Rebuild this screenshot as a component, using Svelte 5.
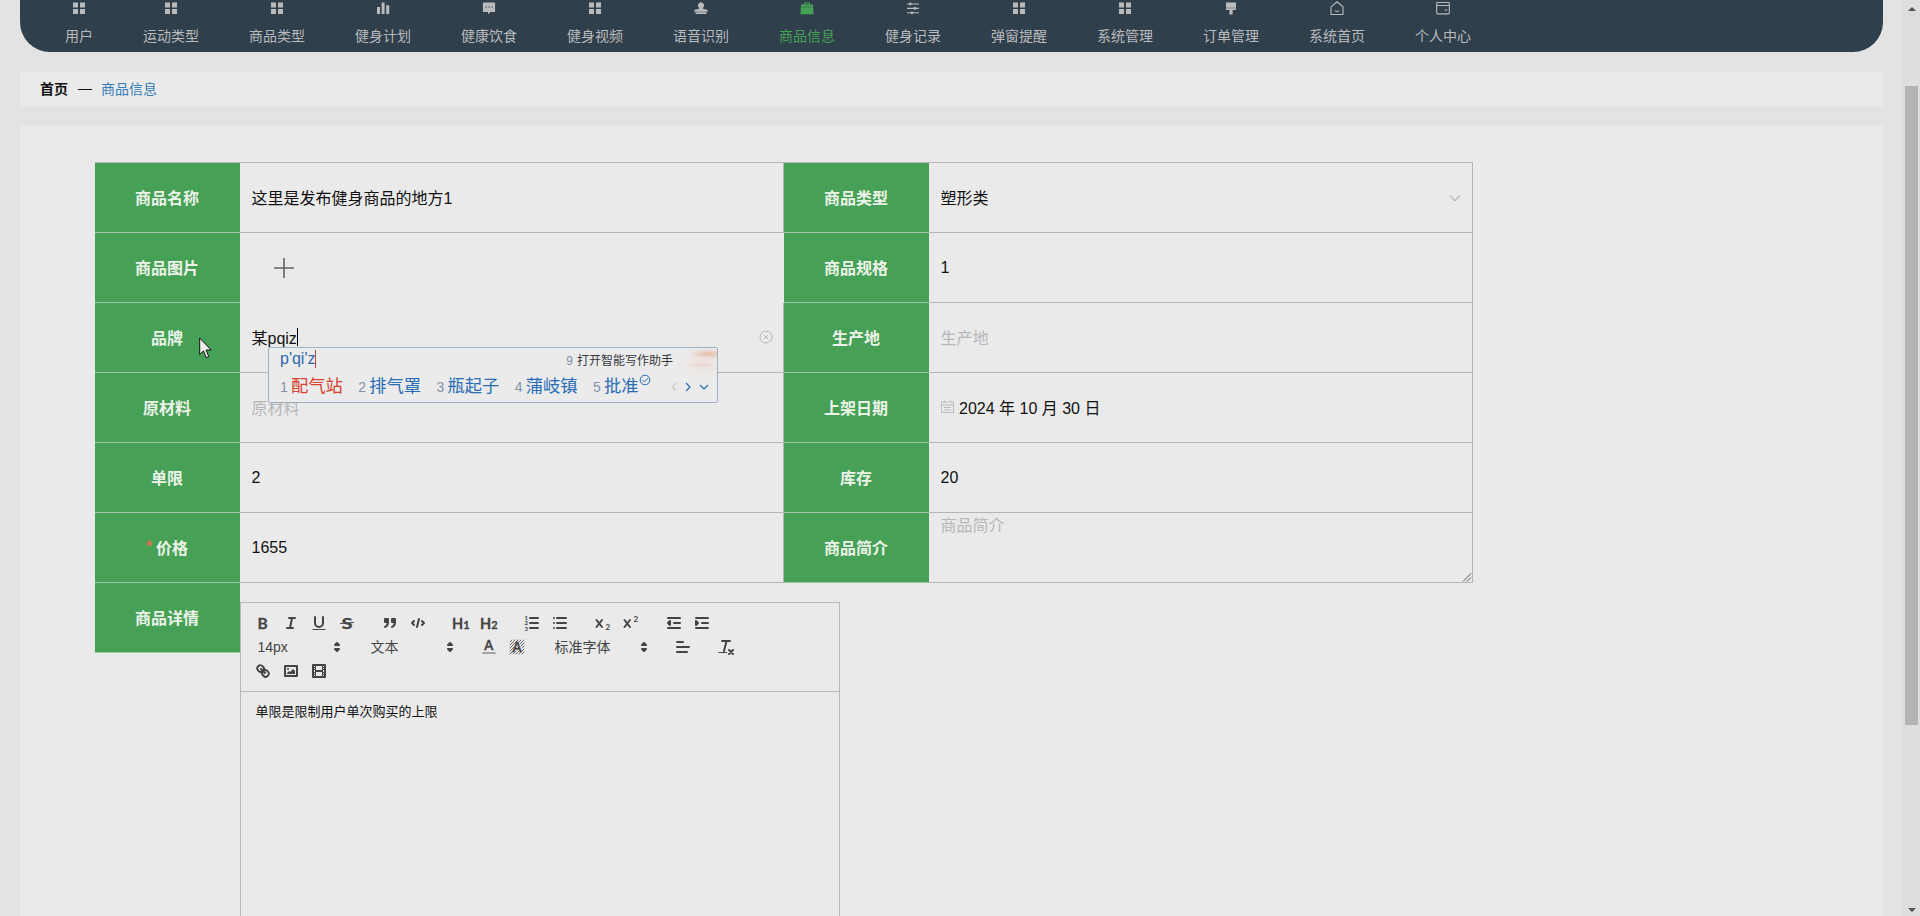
<script lang="ts">
	type NavItem = {
		label: string;
		icon: string;
	};

	const navItems: NavItem[] = [
		{ label: "用户", icon: "menu" },
		{ label: "运动类型", icon: "menu" },
		{ label: "商品类型", icon: "menu" },
		{ label: "健身计划", icon: "chart" },
		{ label: "健康饮食", icon: "comment" },
		{ label: "健身视频", icon: "menu" },
		{ label: "语音识别", icon: "stamp" },
		{ label: "商品信息", icon: "bag" },
		{ label: "健身记录", icon: "operation" },
		{ label: "弹窗提醒", icon: "menu" },
		{ label: "系统管理", icon: "menu" },
		{ label: "订单管理", icon: "brush" },
		{ label: "系统首页", icon: "house" },
		{ label: "个人中心", icon: "card" },
	];
	const active = "商品信息";

	const candidates = ["配气站", "排气罩", "瓶起子", "蒲岐镇", "批准"];
</script>

{#snippet navIcon(name: string)}
	<svg class="nav-icon" viewBox="0 0 14 14">
		{#if name === "menu"}
			<path d="M1 1.5h5v5H1zM8 1.5h5v5H8zM1 8h5v5H1zM8 8h5v5H8z" />
		{:else if name === "chart"}
			<path d="M1 6h3v7H1zM5.6 1.5h3V13h-3zM10.2 4.3h3V13h-3z" />
		{:else if name === "comment"}
			<path d="M1.5 1.5h11a.6.6 0 0 1 .6.6v8.3a.6.6 0 0 1-.6.6H8.5L6 13.2V11H1.5a.6.6 0 0 1-.6-.6V2.1a.6.6 0 0 1 .6-.6z" />
			<path class="dots" d="M3.5 6h1.3M6.4 6h1.3M9.3 6h1.3" />
		{:else if name === "stamp"}
			<path d="M7 1.2a3.2 3.2 0 0 1 2.200 5.400c-.5.600-.3 1.300.4 1.500l2.400.4a1.500 1.500 0 0 1 1.500 2.300H.5A1.500 1.500 0 0 1 2 8.500l2.400-.4c.7-.2.9-.9.4-1.500A3.200 3.200 0 0 1 7 1.200zM1.500 11.200h11V13h-11z" />
		{:else if name === "bag"}
			<path d="M4 3.5V1.4h6v2.1h3L13.5 13.2H.5L1 3.5zM5.1 3.5h3.8v-1H5.1z" fill-rule="evenodd" />
			<path class="seam" d="M1.5 6h11" />
		{:else if name === "operation"}
			<path class="line" d="M1 3h12M1 7.4h12M1 11.8h12" />
			<circle cx="4.3" cy="3" r="1.4" />
			<circle cx="9" cy="7.4" r="1.4" />
			<circle cx="6" cy="11.8" r="1.4" />
		{:else if name === "brush"}
			<path d="M2 1.5h10V9H8.6v4.5H5.4V9H2z" />
			<path class="seam" d="M2 7h10" />
		{:else if name === "house"}
			<path class="line" d="M1 5.8 7 .8l6 5V13.5H1zM5 9.5c1 1.3 3 1.3 4 0" />
		{:else}
			<path class="line" d="M1.5 1.5h11a.8.8 0 0 1 .8.8v9.8a.8.8 0 0 1-.8.8h-11a.8.8 0 0 1-.8-.8V2.3a.8.8 0 0 1 .8-.8zM.7 4.5h12.6M8.5 9h2.8" />
		{/if}
	</svg>
{/snippet}

{#snippet arrows()}
	<svg class="tool arrows" viewBox="0 0 18 18">
		<polygon class="solid" points="7 11 9 13 11 11 7 11" />
		<polygon class="solid" points="7 7 9 5 11 7 7 7" />
	</svg>
{/snippet}

<div class="page">
	<div class="content">
		<nav>
			{#each navItems as item}
				<div class="nav-item" class:active={item.label === active}>
					{@render navIcon(item.icon)}
					<span>{item.label}</span>
				</div>
			{/each}
		</nav>

		<div class="breadcrumb">
			<b>首页</b>
			<span class="dash">—</span>
			<span class="current">商品信息</span>
		</div>

		<main>
			<div class="form">
				<div class="label">商品名称</div>
				<div class="value">这里是发布健身商品的地方1</div>
				<div class="label">商品类型</div>
				<div class="value">
					塑形类
					<svg class="chevron" viewBox="0 0 12 12"><path d="M1 3.5 6 8.7l5-5.2" /></svg>
				</div>

				<div class="label">商品图片</div>
				<div class="value upload">
					<svg viewBox="0 0 20 20"><path d="M10 0v20M0 10h20" /></svg>
				</div>
				<div class="label">商品规格</div>
				<div class="value number">1</div>

				<div class="label">
					品牌
					<svg class="pointer" viewBox="0 0 13 22">
						<path d="M.7 1v16.5l3.8-3.6 2.7 6.7 2.6-1.1-2.8-6.5h5.2z" />
					</svg>
				</div>
				<div class="value">
					某pqiz<i class="caret"></i>
					<svg class="clear" viewBox="0 0 14 14">
						<circle cx="7" cy="7" r="6" />
						<path d="m4.9 4.9 4.2 4.2M9.1 4.9 4.9 9.1" />
					</svg>
					<div class="ime">
						<div class="ime-top">
							<span class="pinyin">p'qi'z</span>
							<span class="hint"><em>9</em>打开智能写作助手</span>
						</div>
						<div class="ime-list">
							{#each candidates as word, i}
								<span class="candidate" class:first={i === 0}><em>{i + 1}</em>{word}</span>
							{/each}
							<svg class="check" viewBox="0 0 12 12">
								<circle cx="6" cy="6" r="4.8" />
								<path d="m3.5 6 1.9 1.9L9.3 4" />
							</svg>
							<svg class="pager" viewBox="0 0 40 12">
								<path class="off" d="M6 2 2.5 6 6 10" />
								<path d="m16 2 4 4-4 4" />
								<path d="m30 4 4 4 4-4" />
							</svg>
						</div>
					</div>
				</div>
				<div class="label">生产地</div>
				<div class="value placeholder">生产地</div>

				<div class="label">原材料</div>
				<div class="value placeholder">原材料</div>
				<div class="label">上架日期</div>
				<div class="value date">
					<svg viewBox="0 0 14 14">
						<path d="M.5 2h12v10.500H.5zM.5 5h12M3.500.500v2M9.500.500v2M3 7.500h7M3 10h7" />
					</svg>
					2024 年 10 月 30 日
				</div>

				<div class="label">单限</div>
				<div class="value number">2</div>
				<div class="label">库存</div>
				<div class="value number">20</div>

				<div class="label"><span class="required">*</span>价格</div>
				<div class="value number">1655</div>
				<div class="label">商品简介</div>
				<div class="value placeholder textarea">
					商品简介
					<svg class="grip" viewBox="0 0 10 10"><path d="M1 9.5 9 1.5M5 9.5l4-4" /></svg>
				</div>

				<div class="label">商品详情</div>
				<div class="detail">
					<div class="editor">
						<div class="toolbar">
							<div class="group">
								<svg class="tool" viewBox="0 0 18 18"><text x="3.6" y="14.5" font-size="15.5">B</text></svg>
								<svg class="tool" viewBox="0 0 18 18">
									<path d="M7 4h6M5 14h6M8 14l2-10" />
								</svg>
								<svg class="tool" viewBox="0 0 18 18">
									<path d="M5 3v6a4 4 0 0 0 8 0V3" />
									<path class="thin" d="M3 15.5h12" />
								</svg>
								<svg class="tool" viewBox="0 0 18 18">
									<text x="3.5" y="14.5" font-size="15.5" textLength="11" lengthAdjust="spacingAndGlyphs">S</text>
									<path class="thin" d="M15.5 8.5 2.5 9.5" />
								</svg>
							</div>
							<div class="group">
								<svg class="tool" viewBox="0 0 18 18">
									<path class="solid" d="M4 5h3v3H4zM11 5h3v3h-3zM7 8c0 4-3 5-3 5M14 8c0 4-3 5-3 5" />
								</svg>
								<svg class="tool" viewBox="0 0 18 18">
									<path d="M5 7 3 9l2 2M13 7l2 2-2 2M10 5 8 13" />
								</svg>
							</div>
							<div class="group">
								<svg class="tool" viewBox="0 0 18 18">
									<text x="0" y="14.5" font-size="14.5">H</text>
									<text x="11.2" y="14.5" font-size="11">1</text>
								</svg>
								<svg class="tool" viewBox="0 0 18 18">
									<text x="0" y="14.5" font-size="14.5">H</text>
									<text x="11.2" y="14.5" font-size="11">2</text>
								</svg>
							</div>
							<div class="group">
								<svg class="tool" viewBox="0 0 18 18">
									<path d="M7 4h8M7 9h8M7 14h8" />
									<text class="tiny" x="1.5" y="6">1</text>
									<text class="tiny" x="1.5" y="11.3">2</text>
									<text class="tiny" x="1.5" y="16.6">3</text>
								</svg>
								<svg class="tool" viewBox="0 0 18 18">
									<path d="M6 4h9M6 9h9M6 14h9M3 4h0M3 9h0M3 14h0" />
								</svg>
							</div>
							<div class="group">
								<svg class="tool" viewBox="0 0 18 18">
									<path d="m2.5 6 5.5 7M8 6l-5.500 7" />
									<text class="script" x="11.5" y="16">2</text>
								</svg>
								<svg class="tool" viewBox="0 0 18 18">
									<path d="m2.5 6 5.5 7M8 6l-5.500 7" />
									<text class="script" x="11.5" y="8">2</text>
								</svg>
							</div>
							<div class="group">
								<svg class="tool" viewBox="0 0 18 18">
									<path d="M3 14h12M3 4h12M9 9h6" />
									<polygon class="solid" points="5 7 5 11 3 9 5 7" />
								</svg>
								<svg class="tool" viewBox="0 0 18 18">
									<path d="M3 14h12M3 4h12M9 9h6" />
									<polygon class="solid" points="3 7 3 11 5 9 3 7" />
								</svg>
							</div>
							<div class="group picker"><span>14px</span>{@render arrows()}</div>
							<div class="group picker"><span>文本</span>{@render arrows()}</div>
							<div class="group">
								<svg class="tool" viewBox="0 0 18 18">
									<text x="4.3" y="11.8" font-size="13">A</text>
									<path class="faded" d="M3 15h12" />
								</svg>
								<svg class="tool" viewBox="0 0 18 18">
									<path class="hatch" d="M2 4l2-2M2 7l5-5M2 10l8-8M2 13l4-4M8 4l2-2M2 16l4-4M10 5l3-3M12 6l4-4M13 8l3-3M14 10l2-2M5 16l3-3M8 16l3-3M11 16l5-5M14 16l2-2" />
									<text x="4.6" y="13.8" font-size="13">A</text>
								</svg>
							</div>
							<div class="group picker wide"><span>标准字体</span>{@render arrows()}</div>
							<div class="group">
								<svg class="tool" viewBox="0 0 18 18">
									<path d="M3 9h12M3 14h10M3 4h6" />
								</svg>
							</div>
							<div class="group">
								<svg class="tool" viewBox="0 0 18 18">
									<path d="M5 3h8M9.4 3.5 7 13M12 12l4 4M16 12l-4 4" />
									<path class="thin" d="M2 14.5h7.5" />
								</svg>
							</div>
							<div class="group">
								<svg class="tool" viewBox="0 0 18 18">
									<path d="M7 7l4 4" />
									<path d="M8.9 4.577a3.476 3.476 0 0 1 .36 4.679A3.476 3.476 0 0 1 4.577 8.9C3.185 7.5 2.035 6.4 4.217 4.217S7.5 3.185 8.9 4.577Z" />
									<path d="M13.423 9.1a3.476 3.476 0 0 0-4.679-.36 3.476 3.476 0 0 0 .36 4.679c1.392 1.392 2.5 2.542 4.679.36S14.815 10.5 13.423 9.1Z" />
								</svg>
								<svg class="tool" viewBox="0 0 18 18">
									<rect x="3" y="4" width="12" height="10" />
									<circle class="fill" cx="6" cy="7" r="1" />
									<polyline class="fill" points="5 12 5 11 7 9 8 10 11 7 13 9 13 12 5 12" />
								</svg>
								<svg class="tool" viewBox="0 0 18 18">
									<rect x="3" y="3" width="12" height="12" />
									<path class="fill" d="M5 3h1v12H5zM12 3h1v12h-1zM5 8h8v2H5zM3 5h3v1H3zM3 7h3v1H3zM3 10h3v1H3zM3 12h3v1H3zM12 5h3v1h-3zM12 7h3v1h-3zM12 10h3v1h-3zM12 12h3v1h-3z" />
								</svg>
							</div>
						</div>
						<p>单限是限制用户单次购买的上限</p>
					</div>
				</div>
			</div>
		</main>
	</div>

	<div class="scrollbar">
		<svg viewBox="0 0 8 4"><path d="M0 4 4 0l4 4z" /></svg>
		<div class="thumb"></div>
		<svg viewBox="0 0 8 4"><path d="M0 0l4 4 4-4z" /></svg>
	</div>
</div>

<style>
	:global(body) {
		margin: 0;
	}

	.page {
		display: flex;
		height: 916px;
		overflow: hidden;
		background: #e3e3e3;
		color: #111;
		font-family: "Liberation Sans", "Noto Sans CJK SC", sans-serif;
		font-size: 16px;
	}

	.content {
		flex: 1;
		display: flex;
		flex-direction: column;
		gap: 20px;
		padding: 0 20px;
	}

	nav {
		display: flex;
		flex: none;
		height: 52px;
		box-sizing: border-box;
		padding: 1px 20px 0;
		background: #303f4c;
		border-radius: 0 0 30px 30px;
		color: #b9bbbd;
		font-size: 14px;
	}

	.nav-item {
		display: flex;
		flex-direction: column;
		align-items: center;
		gap: 11px;
		padding: 0 25px;
		line-height: 20px;
	}

	.nav-item.active {
		color: #46a156;
	}

	.nav-icon {
		width: 14px;
		height: 14px;
		fill: currentColor;
	}

	.nav-icon .line {
		fill: none;
		stroke: currentColor;
		stroke-width: 1.1;
	}

	.nav-icon .seam,
	.nav-icon .dots {
		stroke: #303f4c;
		stroke-width: 0.4;
	}

	.nav-icon .dots {
		stroke-width: 1.2;
	}

	.breadcrumb {
		display: flex;
		flex: none;
		align-items: center;
		box-sizing: border-box;
		height: 34px;
		padding: 0 0 2px 20px;
		background: #eaeaea;
		font-size: 14px;
	}

	.dash {
		margin: 0 9px 0 10px;
	}

	.current {
		color: #367cb5;
	}

	main {
		flex: 1;
		min-height: 0;
		padding: 36px 75px 0;
		background: #eaeaea;
	}

	.form {
		display: grid;
		grid-template-columns: 145px 544px 145px 544px;
		grid-auto-rows: 70px;
		width: 1378px;
		border-top: 1px solid #b4b5b6;
	}

	.label,
	.value {
		position: relative;
		display: flex;
		align-items: center;
		box-sizing: border-box;
		padding-bottom: 2px;
		border-bottom: 1px solid #b4b5b6;
	}

	.label {
		justify-content: center;
		padding-right: 1px;
		background: #46a156;
		border-bottom-color: #9dc8a3;
		color: #ebf3e8;
		font-weight: bold;
	}

	.required {
		margin-right: 4px;
		color: #d9744f;
	}

	.value {
		padding-left: 11.5px;
		border-right: 1px solid #b4b5b6;
	}

	.value.number {
		padding-bottom: 0;
	}

	.value.upload {
		padding: 0 0 0 34px;
		border-color: transparent;
	}

	.upload svg {
		width: 20px;
		height: 20px;
		stroke: #606266;
		stroke-width: 1.6;
	}

	.placeholder {
		color: #b6b8bc;
	}

	.chevron {
		width: 12px;
		height: 12px;
		margin: 3px 11px 0 auto;
		fill: none;
		stroke: #b4b6ba;
		stroke-width: 1.2;
	}

	.pointer {
		position: absolute;
		left: 104px;
		top: 34px;
		width: 13px;
		height: 22px;
		fill: #eee;
		stroke: #111;
	}

	.caret {
		width: 1px;
		height: 18px;
		background: #000;
	}

	.clear {
		width: 14px;
		height: 14px;
		margin: 0 10px 0 auto;
		fill: none;
		stroke: #b4b6ba;
	}

	.date {
		gap: 4.5px;
	}

	.date svg {
		width: 14px;
		height: 14px;
		fill: none;
		stroke: #b9bbbf;
	}

	.textarea {
		align-items: flex-start;
		padding-top: 1px;
		line-height: 24px;
	}

	.grip {
		position: absolute;
		right: 0;
		bottom: 0;
		width: 10px;
		height: 10px;
		stroke: #555;
	}

	.ime {
		position: absolute;
		left: 28px;
		top: 44px;
		z-index: 2;
		box-sizing: border-box;
		width: 450px;
		height: 56px;
		padding: 0 0 0 11px;
		border: 1px solid #9fb0c4;
		border-radius: 2px;
		background:
			radial-gradient(ellipse 20px 5px at 440px 6px, #e6bfab, transparent),
			radial-gradient(ellipse 16px 3px at 432px 17px, #ecd6cc, transparent),
			radial-gradient(ellipse 24px 18px at 434px 14px, #eee2dd, transparent),
			#ebebeb;
	}

	.ime em {
		color: #8492a8;
		font-style: normal;
	}

	.ime-top {
		display: flex;
		align-items: center;
		justify-content: space-between;
		height: 22px;
		padding-right: 44px;
	}

	.pinyin {
		border-right: 1px solid #c74432;
		color: #2f68b0;
		line-height: 18px;
	}

	.hint {
		color: #36383c;
		font-size: 12px;
	}

	.hint em {
		margin-right: 4px;
	}

	.ime-list {
		display: flex;
		align-items: center;
		height: 28px;
		color: #2a6db5;
		font-size: 17.3px;
	}

	.candidate {
		margin-right: 15.4px;
		white-space: nowrap;
	}

	.candidate.first {
		color: #d8402f;
	}

	.candidate em {
		display: inline-block;
		width: 11px;
		font-size: 14px;
	}

	.check,
	.pager {
		fill: none;
		stroke: #2a6db5;
	}

	.check {
		width: 12px;
		height: 12px;
		margin: -8px 0 0 -15px;
	}

	.pager {
		width: 40px;
		height: 12px;
		margin: 5px 0 0 19px;
		stroke-width: 1.2;
	}

	.pager .off {
		stroke: #c3cad2;
	}

	.detail {
		grid-column: span 3;
		padding-top: 19px;
	}

	.editor {
		width: 598px;
		height: 400px;
		border: 1px solid #b7b8b9;
	}

	.toolbar {
		display: flex;
		flex-wrap: wrap;
		padding: 8px;
		border-bottom: 1px solid #b7b8b9;
		color: #444;
		font-size: 14px;
	}

	.group {
		display: flex;
		align-items: center;
		height: 24px;
		margin-right: 15px;
	}

	.picker {
		justify-content: space-between;
		box-sizing: border-box;
		width: 98px;
		padding: 0 1px 0 8.5px;
	}

	.picker.wide {
		width: 108px;
	}

	.picker span {
		line-height: 21px;
	}

	.tool {
		width: 18px;
		height: 18px;
		margin: 0 5px;
		overflow: visible;
		fill: none;
		stroke: #444;
		stroke-width: 2;
		stroke-linecap: round;
		stroke-linejoin: round;
	}

	.tool.arrows {
		margin: 0;
	}

	.tool text {
		fill: #444;
		stroke: #444;
		stroke-width: 0.3;
		font-family: Lato, sans-serif;
		font-weight: bold;
	}

	.tool .tiny {
		stroke: none;
		font-size: 6px;
	}

	.tool .script {
		stroke: none;
		font-size: 8px;
	}

	.tool .solid {
		fill: #444;
	}

	.tool .fill {
		fill: #444;
		stroke: none;
	}

	.tool .thin {
		stroke-width: 1;
	}

	.tool .hatch {
		stroke-width: 0.8;
	}

	.tool .faded {
		stroke: #a5a5a5;
	}

	.editor p {
		margin: 0;
		padding: 10px 14.5px;
		font-size: 13px;
		line-height: 19px;
	}

	.scrollbar {
		display: flex;
		flex-direction: column;
		align-items: center;
		box-sizing: border-box;
		width: 17px;
		padding: 7px 0 4px;
		background: #dedede;
	}

	.scrollbar svg {
		width: 8px;
		height: 4px;
		fill: #505050;
	}

	.thumb {
		width: 13px;
		height: 639px;
		margin: 75px 0 auto;
		background: #b4b4b4;
	}
</style>
